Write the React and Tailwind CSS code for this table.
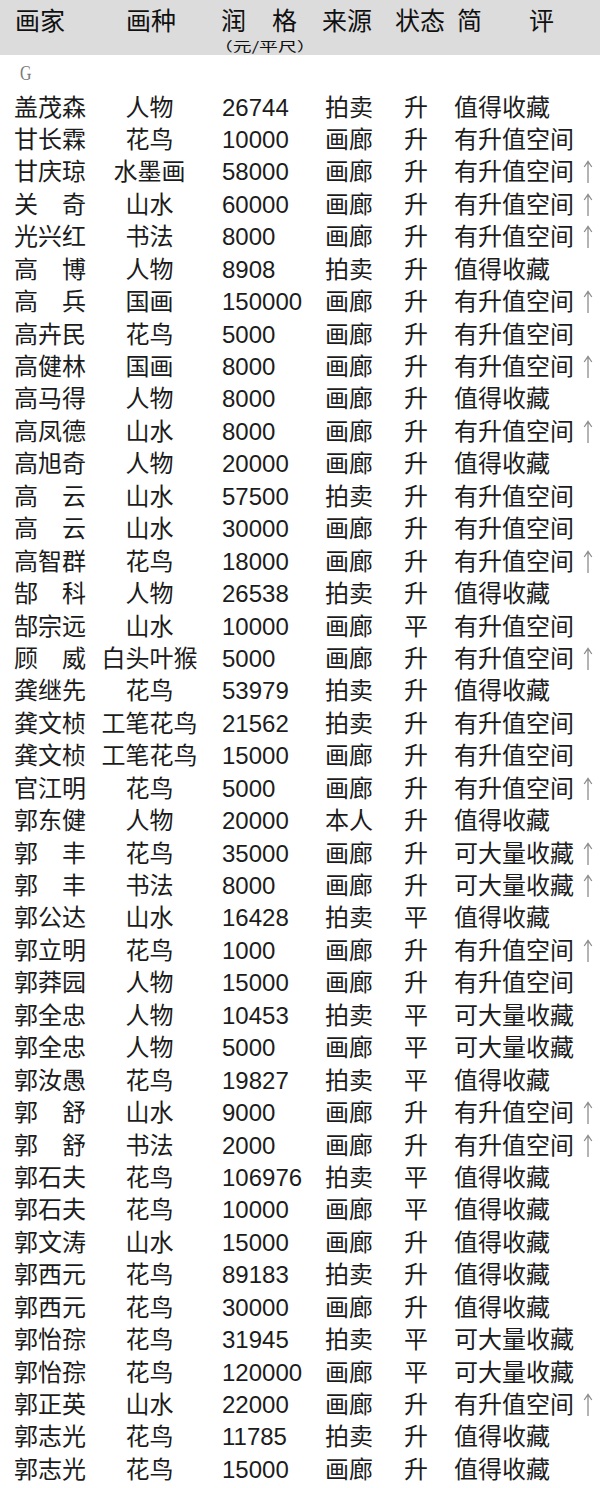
import React from "react";

// 画家 画种 润格 来源 状态 简评 升值箭头
const rows = [
  ["盖茂森", "人物", "26744", "拍卖", "升", "值得收藏", false],
  ["甘长霖", "花鸟", "10000", "画廊", "升", "有升值空间", false],
  ["甘庆琼", "水墨画", "58000", "画廊", "升", "有升值空间", true],
  ["关 奇", "山水", "60000", "画廊", "升", "有升值空间", true],
  ["光兴红", "书法", "8000", "画廊", "升", "有升值空间", true],
  ["高 博", "人物", "8908", "拍卖", "升", "值得收藏", false],
  ["高 兵", "国画", "150000", "画廊", "升", "有升值空间", true],
  ["高卉民", "花鸟", "5000", "画廊", "升", "有升值空间", false],
  ["高健林", "国画", "8000", "画廊", "升", "有升值空间", true],
  ["高马得", "人物", "8000", "画廊", "升", "值得收藏", false],
  ["高凤德", "山水", "8000", "画廊", "升", "有升值空间", true],
  ["高旭奇", "人物", "20000", "画廊", "升", "值得收藏", false],
  ["高 云", "山水", "57500", "拍卖", "升", "有升值空间", false],
  ["高 云", "山水", "30000", "画廊", "升", "有升值空间", false],
  ["高智群", "花鸟", "18000", "画廊", "升", "有升值空间", true],
  ["郜 科", "人物", "26538", "拍卖", "升", "值得收藏", false],
  ["郜宗远", "山水", "10000", "画廊", "平", "有升值空间", false],
  ["顾 威", "白头叶猴", "5000", "画廊", "升", "有升值空间", true],
  ["龚继先", "花鸟", "53979", "拍卖", "升", "值得收藏", false],
  ["龚文桢", "工笔花鸟", "21562", "拍卖", "升", "有升值空间", false],
  ["龚文桢", "工笔花鸟", "15000", "画廊", "升", "有升值空间", false],
  ["官江明", "花鸟", "5000", "画廊", "升", "有升值空间", true],
  ["郭东健", "人物", "20000", "本人", "升", "值得收藏", false],
  ["郭 丰", "花鸟", "35000", "画廊", "升", "可大量收藏", true],
  ["郭 丰", "书法", "8000", "画廊", "升", "可大量收藏", true],
  ["郭公达", "山水", "16428", "拍卖", "平", "值得收藏", false],
  ["郭立明", "花鸟", "1000", "画廊", "升", "有升值空间", true],
  ["郭莽园", "人物", "15000", "画廊", "升", "有升值空间", false],
  ["郭全忠", "人物", "10453", "拍卖", "平", "可大量收藏", false],
  ["郭全忠", "人物", "5000", "画廊", "平", "可大量收藏", false],
  ["郭汝愚", "花鸟", "19827", "拍卖", "平", "值得收藏", false],
  ["郭 舒", "山水", "9000", "画廊", "升", "有升值空间", true],
  ["郭 舒", "书法", "2000", "画廊", "升", "有升值空间", true],
  ["郭石夫", "花鸟", "106976", "拍卖", "平", "值得收藏", false],
  ["郭石夫", "花鸟", "10000", "画廊", "平", "值得收藏", false],
  ["郭文涛", "山水", "15000", "画廊", "升", "值得收藏", false],
  ["郭西元", "花鸟", "89183", "拍卖", "升", "值得收藏", false],
  ["郭西元", "花鸟", "30000", "画廊", "升", "值得收藏", false],
  ["郭怡孮", "花鸟", "31945", "拍卖", "平", "可大量收藏", false],
  ["郭怡孮", "花鸟", "120000", "画廊", "平", "可大量收藏", false],
  ["郭正英", "山水", "22000", "画廊", "升", "有升值空间", true],
  ["郭志光", "花鸟", "11785", "拍卖", "升", "值得收藏", false],
  ["郭志光", "花鸟", "15000", "画廊", "升", "值得收藏", false],
];

const UpArrow = () => (
  <svg width="10" height="24" viewBox="0 0 10 24" className="shrink-0 -ml-[2px]">
    <path
      d="M5 1.5V23M1.2 7L5 1.5L8.8 7"
      fill="none"
      stroke="#8d8d8d"
      strokeWidth="1.3"
    />
  </svg>
);

const Name = ({ text }) => {
  const parts = text.split(" ");
  if (parts.length === 1) return <span>{text}</span>;
  return (
    <span className="flex w-[72px] justify-between">
      <span>{parts[0]}</span>
      <span>{parts[1]}</span>
    </span>
  );
};

const Row = ({ row }) => {
  const [name, kind, price, source, status, note, up] = row;
  return (
    <div className="flex h-[32.44px] items-center text-[24px] leading-none">
      <div className="w-[100px] pl-[14px]">
        <Name text={name} />
      </div>
      <div className="w-[99px] text-center">{kind}</div>
      <div className="w-[125px] pl-[23px]">{price}</div>
      <div className="w-[68px] pl-[1px]">{source}</div>
      <div className="w-[48px] text-center">{status}</div>
      <div className="flex w-[160px] items-center pl-[14px]">
        <span className="w-[131px]">{note}</span>
        {up && <UpArrow />}
      </div>
    </div>
  );
};

export default function App() {
  return (
    <div className="w-[600px] min-h-[1488px] bg-white font-['Liberation_Sans','Noto_Sans_CJK_SC',sans-serif] text-[#1c1c1c]">
      {/* header */}
      <div className="relative z-10 flex h-[55px] items-start bg-[#dcdcdc] text-[25px] leading-[30px] text-[#111]">
        <div className="w-[100px] pl-[15px] pt-[6px]">画家</div>
        <div className="w-[99px] pl-[26px] pt-[6px]">画种</div>
        <div className="flex w-[123px] flex-col pl-[22px] pt-[6px]">
          <span className="flex w-[76px] justify-between">
            <span>润</span>
            <span>格</span>
          </span>
          <span className="mt-[1px] -ml-[7px] h-[17px] w-[70px] origin-left scale-x-[1.45] whitespace-nowrap font-['Noto_Sans_CJK_SC',sans-serif] text-[13px] leading-[17px]">
            （元/平尺）
          </span>
        </div>
        <div className="w-[73px] pt-[6px]">来源</div>
        <div className="w-[62px] pt-[6px]">状态</div>
        <div className="flex w-[97px] justify-between pt-[6px]">
          <span>简</span>
          <span>评</span>
        </div>
      </div>

      {/* letter group */}
      <div className="flex h-[36.3px] items-center pl-[20px]">
        <span className="inline-block origin-left scale-x-[0.72] font-['Liberation_Serif',serif] text-[22px] leading-none text-[#7a7a7a]">
          G
        </span>
      </div>

      {rows.map((row, i) => (
        <Row key={i} row={row} />
      ))}
    </div>
  );
}
